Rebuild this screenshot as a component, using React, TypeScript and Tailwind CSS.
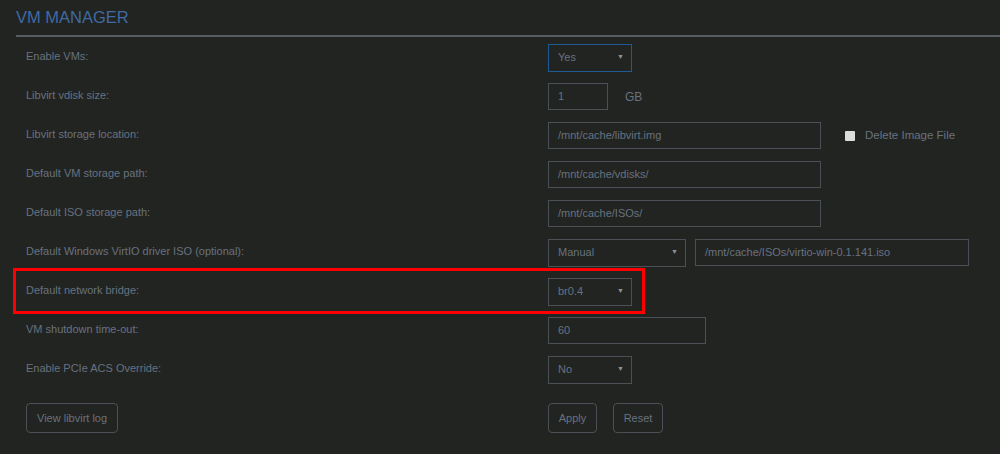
import React from 'react';

const font = { fontFamily: '"Liberation Sans", Arial, sans-serif' };

const Select = ({ value, width, focused }: { value: string; width: string; focused?: boolean }) => (
  <div
    className={`${width} h-[28px] flex items-center justify-between pl-[9px] pr-[7px] border ${
      focused ? 'border-[#1e5b96]' : 'border-[#4a5056]'
    }`}
  >
    <span>{value}</span>
    <span className="text-[7px] text-[#8c939a]">▼</span>
  </div>
);

const Input = ({ value, width }: { value: string; width: string }) => (
  <div className={`${width} h-[27px] flex items-center pl-[9px] border border-[#4a5056]`}>{value}</div>
);

const Row = ({ label, children, highlight }: { label: string; children: React.ReactNode; highlight?: boolean }) => (
  <div className="relative grid grid-cols-[522px_1fr] h-[39px] items-center">
    {highlight && (
      <div className="absolute left-[-13px] top-[-4px] w-[632px] h-[46px] border-[3px] border-[#ff0000] pointer-events-none" />
    )}
    <div className="-mt-[3px]">{label}</div>
    <div className="flex items-center">{children}</div>
  </div>
);

export default function App() {
  return (
    <div className="w-[1000px] h-[454px] bg-[#222422] text-[11px] text-[#67727f] overflow-hidden" style={font}>
      <div className="pl-[16px] pt-[7px]">
        <h1 className="text-[16.5px] leading-[20px] text-[#3f6aa2] h-[28px]">VM MANAGER</h1>
        <div className="h-[2px] bg-[#585d61]" />
      </div>

      <div className="pl-[26px] pt-[1px]">
        <Row label="Enable VMs:">
          <Select value="Yes" width="w-[84px]" focused />
        </Row>
        <Row label="Libvirt vdisk size:">
          <Input value="1" width="w-[60px]" />
          <span className="ml-[17px] text-[12px]">GB</span>
        </Row>
        <Row label="Libvirt storage location:">
          <Input value="/mnt/cache/libvirt.img" width="w-[273px]" />
          <span className="ml-[24px] w-[10px] h-[10px] bg-[#dcdcdc] rounded-[1px]" />
          <span className="ml-[10px] text-[11.5px]">Delete Image File</span>
        </Row>
        <Row label="Default VM storage path:">
          <Input value="/mnt/cache/vdisks/" width="w-[273px]" />
        </Row>
        <Row label="Default ISO storage path:">
          <Input value="/mnt/cache/ISOs/" width="w-[273px]" />
        </Row>
        <Row label="Default Windows VirtIO driver ISO (optional):">
          <Select value="Manual" width="w-[138px]" />
          <div className="ml-[9px]">
            <Input value="/mnt/cache/ISOs/virtio-win-0.1.141.iso" width="w-[274px]" />
          </div>
        </Row>
        <Row label="Default network bridge:" highlight>
          <Select value="br0.4" width="w-[84px]" />
        </Row>
        <Row label="VM shutdown time-out:">
          <Input value="60" width="w-[158px]" />
        </Row>
        <Row label="Enable PCIe ACS Override:">
          <Select value="No" width="w-[84px]" />
        </Row>

        <div className="grid grid-cols-[522px_1fr] mt-[14px]">
          <div>
            <button className="h-[30px] px-[10px] border border-[#4a5056] rounded-[4px]">View libvirt log</button>
          </div>
          <div className="flex gap-[16px]">
            <button className="h-[30px] w-[49px] border border-[#4a5056] rounded-[4px]">Apply</button>
            <button className="h-[30px] w-[50px] border border-[#4a5056] rounded-[4px]">Reset</button>
          </div>
        </div>
      </div>
    </div>
  );
}
